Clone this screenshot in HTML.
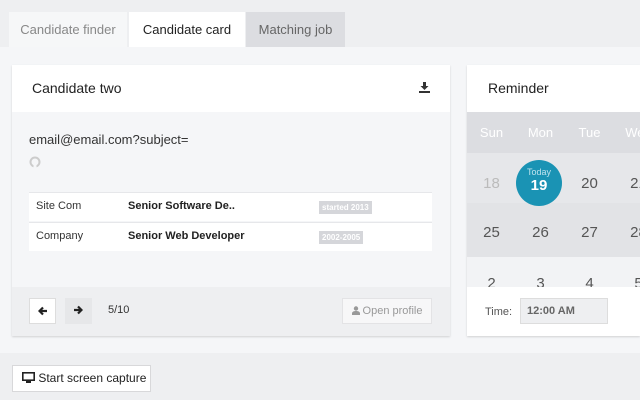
<!DOCTYPE html>
<html><head><style>
*{margin:0;padding:0;box-sizing:border-box}
body{width:640px;height:400px;overflow:hidden;background:#f5f6f8;font-family:"Liberation Sans",sans-serif;position:relative;color:#333}
.a{position:absolute}
.tab{position:absolute;top:12px;height:35px;line-height:35px;text-align:center;font-size:13px}
.cal{position:absolute;left:467px;width:173px;display:flex}
.cal div{width:49px;text-align:center;flex:none}
</style></head><body>
<div class="a" style="left:0;top:0;width:640px;height:47px;background:#eeeff1"></div>
<div class="tab" style="left:9px;width:118px;background:#f6f7f8;color:#888">Candidate finder</div>
<div class="tab" style="left:129px;width:116px;background:#fff;color:#222">Candidate card</div>
<div class="tab" style="left:246px;width:99px;background:#dcdde1;color:#666">Matching job</div>

<div class="a" style="left:12px;top:65px;width:438px;height:271px;background:#f5f6f8;box-shadow:0 1px 2px rgba(0,0,0,.15)"></div>
<div class="a" style="left:12px;top:65px;width:438px;height:47px;background:#fff"></div>
<div class="a" style="left:32px;top:80px;font-size:14px;color:#222">Candidate two</div>
<svg class="a" style="left:419px;top:82px" width="11" height="11" viewBox="0 0 11 11"><path d="M4 0h3v4h2.5L5.5 8 1.5 4H4z" fill="#333"/><rect x="0" y="9" width="11" height="2" fill="#333"/></svg>
<div class="a" style="left:29px;top:132px;font-size:13px;color:#333">email@email.com?subject=</div>
<svg class="a" style="left:29px;top:156px" width="12" height="12" viewBox="0 0 12 12"><circle cx="6" cy="6" r="4.5" fill="none" stroke="#ccc" stroke-width="2"/><rect x="4.5" y="8" width="3" height="4" fill="#f5f6f8"/></svg>
<div class="a" style="left:29px;top:192px;width:403px;height:29px;background:#fff;border-top:1px solid #e6e7ea"></div>
<div class="a" style="left:29px;top:222px;width:403px;height:29px;background:#fff;border-top:1px solid #e6e7ea"></div>
<div class="a" style="left:36px;top:200px;font-size:11px">Site Com</div>
<div class="a" style="left:128px;top:200px;font-size:11px;font-weight:bold;color:#222">Senior Software De..</div>
<div class="a" style="left:319px;top:201px;font-size:8px;font-weight:bold;background:#d5d6da;color:#fff;padding:2px 3px">started 2013</div>
<div class="a" style="left:36px;top:230px;font-size:11px">Company</div>
<div class="a" style="left:128px;top:230px;font-size:11px;font-weight:bold;color:#222">Senior Web Developer</div>
<div class="a" style="left:319px;top:231px;font-size:8px;font-weight:bold;background:#d5d6da;color:#fff;padding:2px 3px">2002-2005</div>

<div class="a" style="left:12px;top:287px;width:438px;height:49px;background:#eeeff1"></div>
<div class="a" style="left:29px;top:298px;width:27px;height:26px;background:#fff;border:1px solid #ddd"></div>
<svg class="a" style="left:38px;top:306px" width="10" height="10" viewBox="0 0 10 10"><path d="M9 5H2M5 1.5L1.5 5 5 8.5" fill="none" stroke="#222" stroke-width="2.2"/></svg>
<div class="a" style="left:65px;top:298px;width:27px;height:26px;background:#e6e7e9"></div>
<svg class="a" style="left:73px;top:305px" width="10" height="10" viewBox="0 0 10 10"><path d="M1 5h7M5 1.5L8.5 5 5 8.5" fill="none" stroke="#222" stroke-width="2.2"/></svg>
<div class="a" style="left:108px;top:304px;font-size:11px">5/10</div>
<div class="a" style="left:342px;top:298px;width:90px;height:26px;background:#f7f7f8;border:1px solid #e3e3e5;font-size:11px;color:#999;line-height:24px;text-align:center">
<svg width="8" height="9" viewBox="0 0 8 9" style="vertical-align:-1px"><circle cx="4" cy="2.5" r="2.2" fill="#999"/><path d="M0 9V7.5C0 5.5 2 5 4 5s4 .5 4 2.5V9z" fill="#999"/></svg> Open profile</div>

<div class="a" style="left:467px;top:65px;width:173px;height:271px;background:#fff;box-shadow:0 1px 2px rgba(0,0,0,.15)"></div>
<div class="a" style="left:488px;top:80px;font-size:14px;color:#222">Reminder</div>
<div class="cal" style="top:112px;height:41px;background:#dcdde1;color:#fff;font-size:13px;line-height:41px"><div>Sun</div><div>Mon</div><div>Tue</div><div>Wed</div></div>
<div class="cal" style="top:153px;height:50px;background:#e6e7ea;color:#555;font-size:15px;line-height:62px"><div style="color:#bbb">18</div><div></div><div>20</div><div>21</div></div>
<div class="cal" style="top:203px;height:54px;background:#e2e3e6;color:#555;font-size:15px;line-height:60px"><div>25</div><div>26</div><div>27</div><div>28</div></div>
<div class="cal" style="top:257px;height:30px;background:#f2f3f5;color:#555;font-size:15px;line-height:54px;overflow:hidden"><div>2</div><div>3</div><div>4</div><div>5</div></div>
<div class="a" style="left:516px;top:160px;width:46px;height:46px;border-radius:50%;background:#1a93b4;color:#fff;text-align:center">
<div style="font-size:9px;margin-top:7px;color:#bfe3ee">Today</div><div style="font-size:15px;font-weight:bold">19</div></div>
<div class="a" style="left:485px;top:306px;font-size:11px;color:#555">Time:</div>
<div class="a" style="left:520px;top:298px;width:88px;height:26px;background:#eeeff1;border:1px solid #ddd;font-size:11px;font-weight:bold;color:#666;line-height:24px;padding-left:6px">12:00 AM</div>

<div class="a" style="left:0;top:353px;width:640px;height:47px;background:#eeeff1"></div>
<div class="a" style="left:12px;top:365px;width:139px;height:27px;background:#fff;border:1px solid #d8d8da;font-size:12px;line-height:25px;padding-left:9px;color:#222">
<svg width="13" height="11" viewBox="0 0 13 11" style="vertical-align:-1px"><rect x="0.8" y="0.8" width="11.4" height="7.4" fill="none" stroke="#222" stroke-width="1.6"/><rect x="4" y="9" width="5" height="2" fill="#222"/></svg> Start screen capture</div>
</body></html>
